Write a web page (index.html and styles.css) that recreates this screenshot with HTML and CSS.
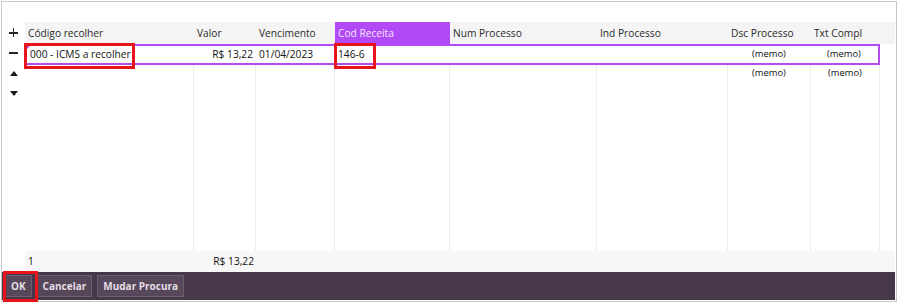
FILE: index.html
```html
<!DOCTYPE html>
<html lang="pt">
<head>
<meta charset="utf-8">
<link rel="stylesheet" href="styles.css">
</head>
<body>
<div class="window">
  <div class="top-gap"></div>
  <div class="main">
    <div class="side">
      <span class="tool plus"></span>
      <span class="tool minus"></span>
      <span class="tool up"></span>
      <span class="tool down"></span>
    </div>
    <div class="grid">
      <div class="head">
        <div class="hc">Código recolher</div>
        <div class="hc">Valor</div>
        <div class="hc">Vencimento</div>
        <div class="hc active">Cod Receita</div>
        <div class="hc">Num Processo</div>
        <div class="hc">Ind Processo</div>
        <div class="hc">Dsc Processo</div>
        <div class="hc">Txt Compl</div>
        <div class="hc"></div>
      </div>
      <div class="body">
        <div class="row selected">
          <div class="c first">000 - ICMS a recolher</div>
          <div class="c num">R$ 13,22</div>
          <div class="c">01/04/2023</div>
          <div class="c">146-6</div>
          <div class="c"></div>
          <div class="c"></div>
          <div class="c memo">(memo)</div>
          <div class="c memo">(memo)</div>
        </div>
        <div class="row">
          <div class="c"></div>
          <div class="c"></div>
          <div class="c"></div>
          <div class="c"></div>
          <div class="c"></div>
          <div class="c"></div>
          <div class="c memo">(memo)</div>
          <div class="c memo">(memo)</div>
        </div>
        <div class="row fill">
          <div class="c"></div>
          <div class="c"></div>
          <div class="c"></div>
          <div class="c"></div>
          <div class="c"></div>
          <div class="c"></div>
          <div class="c"></div>
          <div class="c"></div>
        </div>
      </div>
      <div class="foot">
        <div class="fc">1</div>
        <div class="fc num">R$ 13,22</div>
      </div>
    </div>
  </div>
  <div class="bar">
    <button class="btn">OK</button>
    <button class="btn">Cancelar</button>
    <button class="btn">Mudar Procura</button>
  </div>
  <div class="mark mark-code"></div>
  <div class="mark mark-rec"></div>
  <div class="mark mark-ok"></div>
</div>
</body>
</html>
```

FILE: styles.css
```css
html, body {
  margin: 0;
  padding: 0;
  background: #ffffff;
}
body {
  font-family: "Open Sans", "Noto Sans", sans-serif;
  font-size: 10.2px;
  color: #111;
}
.window {
  position: relative;
  margin: 1px 0 0 1px;
  width: 896px;
  height: 301px;
  box-sizing: border-box;
  border: 1px solid #c8c8c8;
  display: flex;
  flex-direction: column;
  background: #fff;
}
.top-gap {
  height: 20px;
}
.main {
  display: flex;
  height: 250px;
}
.side {
  width: 23px;
  display: flex;
  flex-direction: column;
  align-items: center;
  padding-top: 1px;
  box-sizing: border-box;
}
.tool {
  display: flex;
  align-items: center;
  justify-content: center;
  width: 11px;
  height: 20px;
  position: relative;
}
.plus::before,
.plus::after,
.minus::before {
  content: "";
  position: absolute;
  left: 1px;
  top: 9px;
  width: 9px;
  height: 1.5px;
  background: #262626;
}
.plus::after {
  left: 4.75px;
  top: 5.25px;
  width: 1.5px;
  height: 9px;
}
.up::before {
  content: "";
  display: block;
  border-left: 4px solid transparent;
  border-right: 4px solid transparent;
  border-bottom: 5px solid #1a1a1a;
}
.down::before {
  content: "";
  display: block;
  border-left: 4px solid transparent;
  border-right: 4px solid transparent;
  border-top: 5px solid #1a1a1a;
}
.grid {
  flex: 1;
  display: flex;
  flex-direction: column;
}
.head {
  height: 22px;
  display: grid;
  grid-template-columns: 169px 62px 79px 115px 147px 131px 83px 69px 1fr;
  background: #f4f4f4;
  margin-right: 1px;
}
.hc {
  padding: 4px 3px 0;
  color: #2a2a2a;
  white-space: nowrap;
  overflow: hidden;
}
.hc.active {
  background: #b249f6;
  color: #f2e6fd;
}
.body {
  flex: 1;
  display: flex;
  flex-direction: column;
}
.row {
  width: 855px;
  height: 21px;
  display: grid;
  grid-template-columns: 169px 62px 79px 115px 147px 131px 83px 69px;
  box-sizing: border-box;
}
.row.selected {
  border: 2px solid #b34cf3;
  position: relative;
  grid-template-columns: 167px 62px 79px 115px 147px 131px 83px 67px;
}
.row.selected .c {
  border-right-color: transparent;
  padding-top: 1px;
}
.row.selected::before {
  content: "";
  position: absolute;
  left: 0;
  top: 0;
  border-top: 3px solid #b34cf3;
  border-right: 3px solid transparent;
}
.row.fill {
  flex: 1;
  height: auto;
}
.c {
  border-right: 1px solid #ededed;
  padding: 1px 3px 0;
  white-space: nowrap;
  overflow: hidden;
  color: #111;
}
.c.num {
  text-align: right;
  padding-right: 2px;
}
.c.memo {
  text-align: center;
  font-size: 9.4px;
  padding-top: 1px;
}
.foot {
  height: 21px;
  display: grid;
  grid-template-columns: 169px 62px 1fr;
  background: #f7f7f7;
  margin-right: 1px;
}
.fc {
  padding: 3px 3px 0;
  color: #111;
}
.fc.num {
  text-align: right;
  padding-right: 2px;
}
.bar {
  height: 28px;
  background: #46374a;
  display: flex;
  align-items: center;
  gap: 5px;
  padding: 0 3px;
  margin-right: 1px;
}
.btn {
  font-family: "Open Sans", "Noto Sans", sans-serif;
  font-size: 10px;
  font-weight: 700;
  color: #e3dde4;
  background: #56485a;
  border: 1px solid #6b5e6f;
  height: 22px;
  padding: 0 5px;
  margin: 0;
}
.mark {
  position: absolute;
  border: 3px solid #e8141c;
  box-sizing: border-box;
}
.mark-code {
  left: 22px;
  top: 41px;
  width: 111px;
  height: 26px;
}
.mark-rec {
  left: 332px;
  top: 41px;
  width: 42px;
  height: 26px;
}
.mark-ok {
  left: 1px;
  top: 269px;
  width: 35px;
  height: 31px;
}
```
